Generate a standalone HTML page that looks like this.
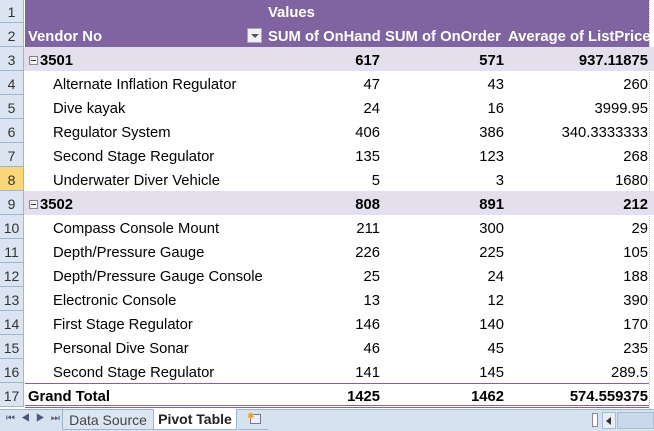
<!DOCTYPE html>
<html><head><meta charset="utf-8"><style>
*{margin:0;padding:0;box-sizing:border-box}
body{width:654px;height:431px;overflow:hidden;background:#fff;font-family:"Liberation Sans",sans-serif;font-size:14.8px;position:relative}
.row{position:absolute;left:0;width:654px;height:24px}
.rh{position:absolute;left:0;top:0;width:24px;height:24px;background:#dbe5f1;border-right:1px solid #9eb6ce;border-bottom:1px solid #9eb6ce;color:#333;text-align:center;line-height:26px;font-size:14px}
.c{position:absolute;top:0;height:24px;line-height:28px;white-space:nowrap}
.a{left:28px}.a2{left:53px}
.b{right:274px}.cc{right:150px}.d{right:6px}
.pur{background:#8064a2;color:#fff;font-weight:bold}
.band{background:#e4dfec;font-weight:bold}
.tabs{position:absolute;left:0;top:409px;width:654px;height:22px;background:#d6e2f0;border-top:1px solid #9eb6ce}
</style></head><body>
<div style="position:absolute;left:649px;top:0;width:1px;height:409px;border-left:1px dotted #bbb"></div>
<div class="row pur" style="top:-1px;left:25px;width:624px"><span class="c" style="left:243px">Values</span></div>
<div class="row" style="top:-1px"><div class="rh">1</div></div>
<div class="row pur" style="top:23px;left:25px;width:624px">
<span class="c" style="left:3px">Vendor No</span>
<span style="position:absolute;left:222px;top:5px;width:15px;height:15px;background:#f0f0f0;border:1px solid #aaa"><span style="position:absolute;left:3px;top:5px;border-left:4px solid transparent;border-right:4px solid transparent;border-top:4px solid #555"></span></span>
<span class="c" style="left:243px">SUM of OnHand</span>
<span class="c" style="left:360px">SUM of OnOrder</span>
<span class="c" style="left:483px">Average of ListPrice</span></div>
<div class="row" style="top:23px"><div class="rh">2</div></div>
<div id="body"></div>
<script>
var rows=[
["g","3501","617","571","937.11875"],
["","Alternate Inflation Regulator","47","43","260"],
["","Dive kayak","24","16","3999.95"],
["","Regulator System","406","386","340.3333333"],
["","Second Stage Regulator","135","123","268"],
["","Underwater Diver Vehicle","5","3","1680"],
["g","3502","808","891","212"],
["","Compass Console Mount","211","300","29"],
["","Depth/Pressure Gauge","226","225","105"],
["","Depth/Pressure Gauge Console","25","24","188"],
["","Electronic Console","13","12","390"],
["","First Stage Regulator","146","140","170"],
["","Personal Dive Sonar","46","45","235"],
["","Second Stage Regulator","141","145","289.5"],
["t","Grand Total","1425","1462","574.559375"]];
var h="";
rows.forEach(function(r,i){
var top=47+i*24,n=i+3;
var cls=r[0]=="g"?"band":"";
var st=r[0]=="t"?"font-weight:bold;":"";
h+='<div class="row '+cls+'" style="top:'+top+'px;'+st+'">';
h+='<div class="rh" style="'+(n==8?'background:#f9d67a;':'')+'font-weight:normal">'+n+'</div>';
if(r[0]=="g")h+='<span style="position:absolute;left:29px;top:9px;width:9px;height:9px;border:1px solid #888;background:#f4f4f4"><span style="position:absolute;left:1px;top:3px;width:5px;height:1px;background:#333"></span></span><span class="c" style="left:40px">'+r[1]+'</span>';
else if(r[0]=="t")h+='<span class="c a">'+r[1]+'</span>';
else h+='<span class="c a2">'+r[1]+'</span>';
h+='<span class="c b">'+r[2]+'</span><span class="c cc">'+r[3]+'</span><span class="c d">'+r[4]+'</span></div>';
});
document.getElementById("body").innerHTML=h;
</script>
<div style="position:absolute;left:25px;top:383px;width:624px;height:1px;background:#8064a2"></div>
<div style="position:absolute;left:25px;top:405px;width:624px;height:3px;border-top:1px solid #8064a2;border-bottom:1px solid #8064a2"></div>
<div class="tabs">
<span style="position:absolute;left:6px;top:3px;font-size:10px;color:#557;letter-spacing:6px">⏮◀▶⏭</span>
<div style="position:absolute;left:62px;top:0;width:92px;height:20px;background:#dce6f2;border:1px solid #9eb6ce;border-top:none;color:#444;text-align:center;line-height:20px;font-size:14px">Data Source</div>
<div style="position:absolute;left:153px;top:-1px;width:84px;height:21px;background:#fff;border:1px solid #9eb6ce;border-top:none;font-weight:bold;text-align:center;line-height:21px;color:#222;font-size:14px">Pivot Table</div>
<div style="position:absolute;left:238px;top:0;width:30px;height:20px;border-bottom:1px solid #9eb6ce"><span style="position:absolute;left:12px;top:4px;width:11px;height:10px;border:1px solid #778;background:#eef"></span><span style="position:absolute;left:9px;top:1px;color:#e8a020;font-size:9px">✱</span></div>
<div style="position:absolute;left:592px;top:3px;width:6px;height:14px;border:1px solid #889;background:#fff"></div>
<div style="position:absolute;left:602px;top:2px;width:14px;height:17px;background:#e8eef6;border:1px solid #a8bcd2"><span style="position:absolute;left:3px;top:4px;border-top:4px solid transparent;border-bottom:4px solid transparent;border-right:5px solid #333"></span></div>
<div style="position:absolute;left:617px;top:2px;width:37px;height:17px;background:#c9d8ea;border:1px solid #a8bcd2"></div>
</div>
</body></html>
